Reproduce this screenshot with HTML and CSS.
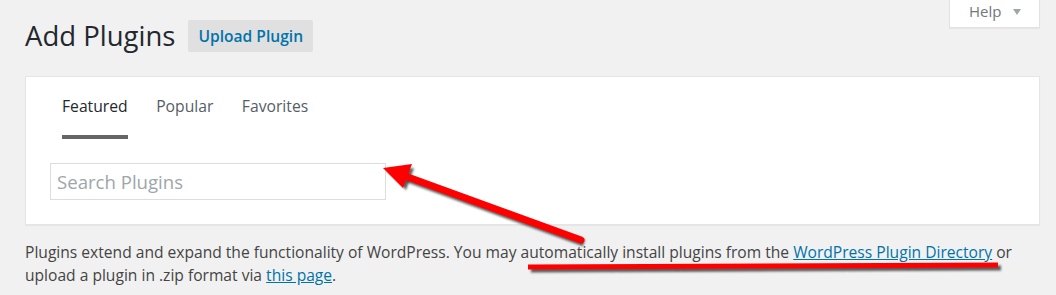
FILE: index.html
```html
<!DOCTYPE html>
<html lang="en">
<head>
  <meta charset="UTF-8" />
  <title>Add Plugins</title>
  <link rel="stylesheet" href="styles.css">
</head>
<body>
  <div class="wrap">
    <div class="help-tab">Help <span class="help-arrow"></span></div>
    <div class="title-row">
      <h1>Add Plugins</h1>
      <a class="upload-btn" href="#">Upload Plugin</a>
    </div>

    <div class="panel">
      <ul class="tabs">
        <li><a class="current" href="#">Featured</a></li>
        <li><a href="#">Popular</a></li>
        <li><a href="#">Favorites</a></li>
      </ul>
      <input class="search" type="search" placeholder="Search Plugins">
    </div>

    <p class="intro">Plugins extend and expand the functionality of WordPress. You may automatically install plugins from the <a href="#">WordPress Plugin Directory</a> or upload a plugin in .zip format via <a href="#">this page</a>.</p>
  </div>

  <!-- red annotation marks drawn over the screenshot -->
  <svg class="marks" width="1056" height="295" viewBox="0 0 1056 295">
    <defs>
      <filter id="soft" x="-10%" y="-50%" width="120%" height="200%">
        <feGaussianBlur stdDeviation="1" />
      </filter>
    </defs>
    <g class="shade" filter="url(#soft)">
      <line x1="408" y1="179" x2="584" y2="243" stroke-width="7" />
      <polygon points="387,171 414,168 406,190" />
      <line x1="531" y1="270" x2="1001" y2="268" stroke-width="5" />
    </g>
    <g class="red">
      <line x1="405" y1="176" x2="581" y2="240" stroke-width="7" stroke-linecap="round" />
      <polygon points="383,168 412,164 403,188" />
      <line x1="528" y1="267" x2="998" y2="265" stroke-width="5" />
    </g>
  </svg>
</body>
</html>
```

FILE: styles.css
```css
body {
  margin: 0;
  background: #f1f1f1;
  font-family: "Open Sans", "Liberation Sans", sans-serif;
  color: #444;
  position: relative;
}
.wrap {
  padding: 0 16px 0 25px;
}
.help-tab {
  float: right;
  height: 28px;
  width: 91px;
  box-sizing: border-box;
  padding-left: 19px;
  background: white;
  border: 1px solid #e2e2e2;
  border-top: none;
  box-shadow: 0 1px 1px rgba(0, 0, 0, 0.04);
  font-size: 15px;
  line-height: 22px;
  color: #72777c;
}
.help-arrow {
  display: inline-block;
  margin-left: 8px;
  border-left: 4px solid transparent;
  border-right: 4px solid transparent;
  border-top: 6px solid #a0a5aa;
  vertical-align: 2px;
}
.title-row {
  display: flex;
  align-items: center;
  gap: 13px;
  padding-top: 20px;
}
h1 {
  margin: 0;
  font-size: 27.5px;
  font-weight: 400;
  line-height: 32px;
  color: #23282d;
}
.upload-btn {
  display: block;
  height: 32px;
  line-height: 32px;
  padding: 0 10px;
  border-radius: 2px;
  background: #e0e0e0;
  color: #0073aa;
  font-size: 15.6px;
  font-weight: 600;
  text-decoration: none;
}
.panel {
  margin-top: 24px;
  background: white;
  border: 1px solid #e5e5e5;
  box-shadow: 0 1px 1px rgba(0, 0, 0, 0.04);
  padding: 0 24px 24px;
}
.tabs {
  list-style: none;
  margin: 0 0 24px 12px;
  padding: 0;
  display: flex;
  gap: 28.5px;
}
.tabs a {
  display: block;
  padding: 19px 0 19px;
  border-bottom: 4px solid transparent;
  font-size: 15.7px;
  line-height: 20px;
  color: #555d66;
  text-decoration: none;
}
.tabs a.current {
  color: #23282d;
  border-bottom-color: #666;
}
.search {
  display: block;
  width: 336px;
  height: 37px;
  box-sizing: border-box;
  margin: 0;
  padding: 0 6px;
  border: 1px solid #ddd;
  font-family: inherit;
  font-size: 18.6px;
  color: #32373c;
}
.search::placeholder {
  color: #a0a5aa;
}
.intro {
  margin: 16px 0 0;
  font-size: 15.6px;
  line-height: 23px;
}
.intro a {
  color: #0073aa;
}
.marks {
  position: absolute;
  left: 0;
  top: 0;
  pointer-events: none;
}
.marks .shade line {
  stroke: rgba(40, 40, 40, 0.75);
}
.marks .shade polygon {
  fill: rgba(40, 40, 40, 0.75);
}
.marks .red line {
  stroke: #ff0000;
}
.marks .red polygon {
  fill: #ff0000;
}
```
